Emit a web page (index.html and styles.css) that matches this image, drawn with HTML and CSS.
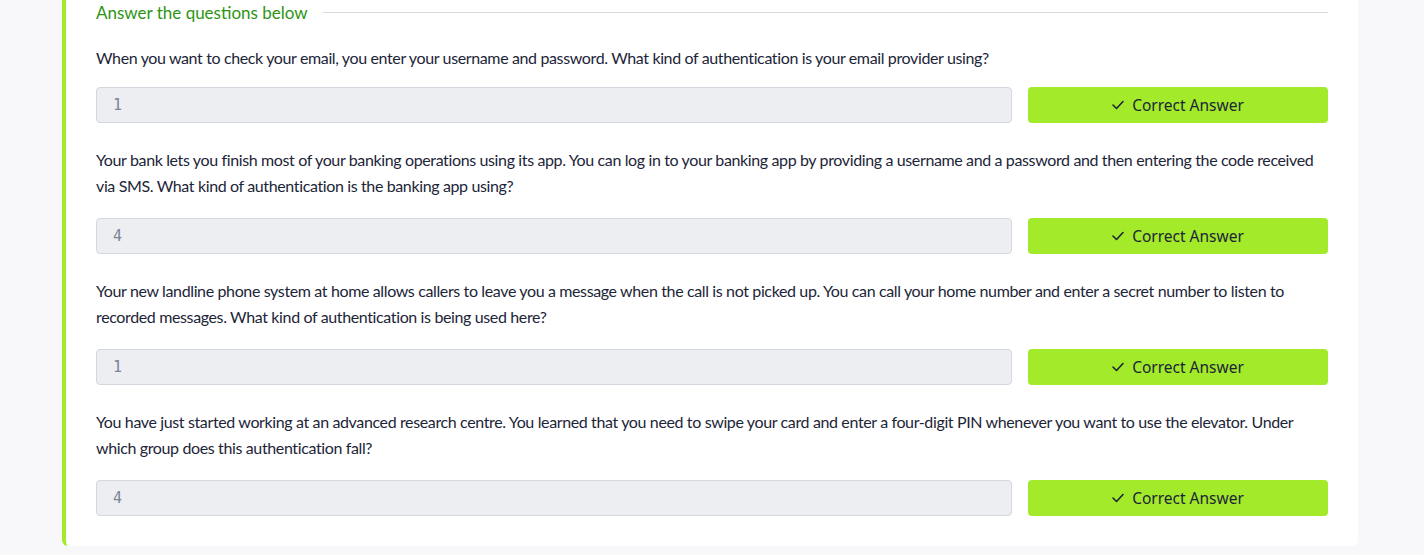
FILE: index.html
```html
<!DOCTYPE html>
<html lang="en">
<head>
<meta charset="utf-8">
<title>Answer the questions below</title>
<link rel="stylesheet" href="styles.css">
</head>
<body>
<div class="page">
  <section class="card">
    <div class="heading">
      <h2 class="heading-title">Answer the questions below</h2>
      <span class="heading-rule"></span>
    </div>

    <div class="question">
      <p class="question-text">When you want to check your email, you enter your username and password. What kind of authentication is your email provider using?</p>
      <div class="answer-row">
        <input class="answer-input" type="text" value="1" disabled>
        <button class="answer-btn" type="button"><svg class="check" viewBox="0 0 12 10" width="12" height="10"><polyline points="1,5 4.5,8.5 11,1.5"/></svg><span>Correct Answer</span></button>
      </div>
    </div>

    <div class="question">
      <p class="question-text">Your bank lets you finish most of your banking operations using its app. You can log in to your banking app by providing a username and a password and then entering the code received via SMS. What kind of authentication is the banking app using?</p>
      <div class="answer-row">
        <input class="answer-input" type="text" value="4" disabled>
        <button class="answer-btn" type="button"><svg class="check" viewBox="0 0 12 10" width="12" height="10"><polyline points="1,5 4.5,8.5 11,1.5"/></svg><span>Correct Answer</span></button>
      </div>
    </div>

    <div class="question">
      <p class="question-text">Your new landline phone system at home allows callers to leave you a message when the call is not picked up. You can call your home number and enter a secret number to listen to recorded messages. What kind of authentication is being used here?</p>
      <div class="answer-row">
        <input class="answer-input" type="text" value="1" disabled>
        <button class="answer-btn" type="button"><svg class="check" viewBox="0 0 12 10" width="12" height="10"><polyline points="1,5 4.5,8.5 11,1.5"/></svg><span>Correct Answer</span></button>
      </div>
    </div>

    <div class="question">
      <p class="question-text">You have just started working at an advanced research centre. You learned that you need to swipe your card and enter a four-digit PIN whenever you want to use the elevator. Under which group does this authentication fall?</p>
      <div class="answer-row">
        <input class="answer-input" type="text" value="4" disabled>
        <button class="answer-btn" type="button"><svg class="check" viewBox="0 0 12 10" width="12" height="10"><polyline points="1,5 4.5,8.5 11,1.5"/></svg><span>Correct Answer</span></button>
      </div>
    </div>
  </section>
</div>
</body>
</html>
```

FILE: styles.css
```css
* { box-sizing: border-box; }

html, body {
  margin: 0;
  padding: 0;
  background: #f8f8fa;
}

body {
  font-family: "Lato", "Noto Sans", sans-serif;
  color: #1c2538;
  height: 555px;
  overflow: hidden;
}

.page {
  padding-left: 62px;
}

.card {
  width: 1296px;
  background: #ffffff;
  border-left: 4px solid #a3ea2a;
  border-radius: 0 0 6px 6px;
  padding: 1px 30px 30px 30px;
}

.heading {
  display: flex;
  align-items: center;
  gap: 15px;
  height: 24px;
}

.heading-title {
  margin: 0;
  font-size: 17px;
  font-weight: 400;
  color: #2c9514;
  white-space: nowrap;
  line-height: 24px;
}

.heading-rule {
  flex: 1;
  height: 1px;
  background: #d5d8dd;
  margin-top: -2px;
}

.question {
  margin-top: 20px;
}

.question + .question {
  margin-top: 24px;
}

.question-text {
  margin: 0 0 16px 0;
  font-size: 16px;
  line-height: 26px;
  letter-spacing: -0.37px;
}

.question + .question .question-text {
  margin-bottom: 19px;
}

.answer-row {
  display: grid;
  grid-template-columns: 1fr 300px;
  gap: 16px;
}

.answer-input {
  height: 36px;
  border: 1px solid #d3d7de;
  border-radius: 4px;
  background: #edeef2;
  padding: 0 16px;
  font-family: "DejaVu Sans Mono", monospace;
  font-size: 15px;
  color: #7a8598;
}

.answer-btn {
  height: 36px;
  border: none;
  border-radius: 4px;
  background: #a3ea2a;
  color: #1c2538;
  font-family: "Noto Sans", sans-serif;
  font-size: 15.5px;
  display: flex;
  align-items: center;
  justify-content: center;
  gap: 8px;
  padding: 0;
}

.check {
  fill: none;
  stroke: #1c2538;
  stroke-width: 1.6;
  stroke-linecap: round;
  stroke-linejoin: round;
}
```
